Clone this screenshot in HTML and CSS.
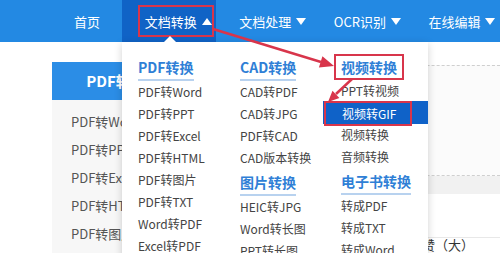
FILE: index.html
```html
<!DOCTYPE html>
<html lang="zh">
<head>
  <meta charset="UTF-8">
  <title>文档转换</title>
  <link rel="stylesheet" href="styles.css">
</head>
<body>

  <header class="nav">
    <ul class="nav-list">
      <li class="nav-item home">首页</li>
      <li class="nav-item active"><span class="mark">文档转换<i class="caret up"></i></span></li>
      <li class="nav-item">文档处理<i class="caret"></i></li>
      <li class="nav-item">OCR识别<i class="caret"></i></li>
      <li class="nav-item">在线编辑<i class="caret"></i></li>
    </ul>
  </header>

  <main class="main">
    <aside class="side">
      <div class="side-title">PDF转换</div>
      <ul class="side-list">
        <li>PDF转Word</li>
        <li>PDF转PPT</li>
        <li>PDF转Excel</li>
        <li>PDF转HTML</li>
        <li>PDF转图片</li>
      </ul>
    </aside>
    <section class="content">
      <div class="upload-box"></div>
      <div class="band"></div>
      <div class="blank"></div>
      <div class="foot-row">编辑赞（大）</div>
    </section>
  </main>

  <!-- dropdown menu -->
  <div class="dropdown">
    <div class="col">
      <h3 class="col-title">PDF转换</h3>
      <a>PDF转Word</a>
      <a>PDF转PPT</a>
      <a>PDF转Excel</a>
      <a>PDF转HTML</a>
      <a>PDF转图片</a>
      <a>PDF转TXT</a>
      <a>Word转PDF</a>
      <a>Excel转PDF</a>
    </div>
    <div class="col">
      <h3 class="col-title">CAD转换</h3>
      <a>CAD转PDF</a>
      <a>CAD转JPG</a>
      <a>PDF转CAD</a>
      <a>CAD版本转换</a>
      <h3 class="col-title">图片转换</h3>
      <a>HEIC转JPG</a>
      <a>Word转长图</a>
      <a>PPT转长图</a>
    </div>
    <div class="col col-last">
      <h3 class="col-title"><span class="mark-box">视频转换</span></h3>
      <a>PPT转视频</a>
      <a class="current"><span class="mark-box">视频转GIF</span></a>
      <a>视频转换</a>
      <a>音频转换</a>
      <h3 class="col-title">电子书转换</h3>
      <a>转成PDF</a>
      <a>转成TXT</a>
      <a>转成Word</a>
    </div>
  </div>

  <!-- red annotation arrows -->
  <svg class="arrows" width="500" height="253" viewBox="0 0 500 253">
    <line x1="213" y1="29" x2="321" y2="62" stroke="#d8354b" stroke-width="2.5"/>
    <polygon points="334,66 318.9,67.6 322.4,56.2" fill="#d8354b"/>
    <line x1="352" y1="79" x2="336" y2="94" stroke="#d8354b" stroke-width="2.5"/>
    <polygon points="328,102 332.5,90.8 339.4,98" fill="#d8354b"/>
  </svg>

</body>
</html>
```

FILE: styles.css
```css
* {
  margin: 0;
  padding: 0;
  box-sizing: border-box;
}

body, html {
  width: 500px;
  height: 253px;
  overflow: hidden;
  font-family: "Noto Sans CJK SC", sans-serif;
  background-color: #fff;
  color: #444;
}

ul {
  list-style: none;
}

/* top nav */
.nav {
  height: 42px;
  background-color: #2389e3;
  padding-left: 52px;
}

.nav-list {
  display: flex;
  height: 100%;
}

.nav-item {
  display: flex;
  align-items: center;
  width: 95px;
  padding-left: 23px;
  color: #fff;
  font-size: 13px;
  white-space: nowrap;
}

.nav-item.home {
  width: 70px;
  padding-left: 22px;
}

.nav-item.active {
  background-color: #1063c6;
  padding-left: 16px;
}

.mark {
  display: flex;
  align-items: center;
  height: 32px;
  padding-left: 5px;
  border: 2px solid #d8354b;
}

.caret {
  display: inline-block;
  margin-left: 5px;
  border-left: 5.5px solid transparent;
  border-right: 5.5px solid transparent;
  border-top: 7px solid #fff;
}

.caret.up {
  border-top: 0;
  border-bottom: 7px solid #fff;
}

/* page body */
.main {
  display: flex;
}

.side {
  margin-left: 52px;
  margin-top: 20px;
  width: 128px;
  height: 200px;
  background-color: #f7f7f7;
}

.side-title {
  height: 38px;
  line-height: 38px;
  background-color: #2b8de6;
  color: #fff;
  font-size: 15px;
  font-weight: 700;
  text-align: center;
}

.side-list {
  padding-top: 8px;
  padding-left: 19px;
}

.side-list li {
  line-height: 28px;
  font-size: 13px;
  color: #555;
}

.content {
  flex: 1;
  margin-left: 10px;
}

.upload-box {
  margin-top: 23px;
  height: 111px;
  background-color: #fbfbfb;
  border-top: 1px dashed #cfcfcf;
  border-bottom: 1px dashed #cfcfcf;
}

.band {
  height: 18px;
  background-color: #f1f1f1;
}

.blank {
  height: 44px;
  border-bottom: 1px solid #e8e8e8;
}

.foot-row {
  text-align: right;
  padding-right: 26px;
  font-size: 13px;
  line-height: 14px;
  color: #333;
}

/* dropdown */
.dropdown {
  position: absolute;
  left: 122px;
  top: 42px;
  width: 306px;
  height: 230px;
  background-color: #fff;
  box-shadow: 0 2px 8px rgba(0, 0, 0, 0.18);
  display: grid;
  grid-template-columns: 102px 99px 105px;
  padding-top: 12px;
}

.dropdown::before {
  content: "";
  position: absolute;
  left: 42px;
  top: -6px;
  border-left: 6px solid transparent;
  border-right: 6px solid transparent;
  border-bottom: 6px solid #fff;
}

.col {
  padding-left: 16px;
}

.col-last {
  padding-left: 0;
}

.col-title {
  display: inline-block;
  height: 26px;
  line-height: 24px;
  font-size: 14px;
  font-weight: 700;
  color: #2f7fd6;
  border-bottom: 2px solid #b8d2ef;
}

.col a {
  display: block;
  line-height: 22px;
  font-size: 12px;
  color: #444;
  white-space: nowrap;
}

.col-last a,
.col-last .col-title {
  margin-left: 18px;
}

.col-last .col-title:first-child {
  border-bottom-color: transparent;
}

.col-last .col-title .mark-box {
  display: inline-block;
  margin-left: -7px;
  padding: 0 5px;
  line-height: 22px;
  border: 2px solid #d8354b;
}

.col-last a.current {
  margin-left: 0;
  padding-left: 1px;
  height: 23px;
  background-color: #0f62c8;
  color: #fff;
}

.current .mark-box {
  display: block;
  width: 88px;
  height: 25px;
  margin-top: -1px;
  padding-left: 16px;
  line-height: 21px;
  border: 2px solid #d8354b;
}

/* annotation overlay */
.arrows {
  position: absolute;
  left: 0;
  top: 0;
  pointer-events: none;
}
```
